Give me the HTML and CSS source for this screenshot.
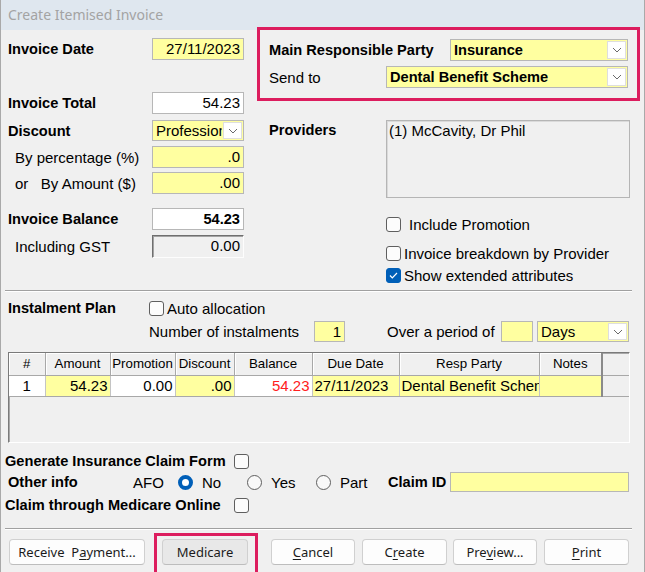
FILE: index.html
```html
<!DOCTYPE html>
<html lang="en">
<head>
    <meta charset="UTF-8">
    <meta name="viewport" content="width=device-width, initial-scale=1.0">
    <title>Create Itemised Invoice</title>
    <link rel="stylesheet" href="styles.css">
</head>
<body>
    <div class="window">
        <div class="titlebar">Create Itemised Invoice</div>

        <div class="top">
            <div class="colLeft">
                <div class="row r1">
                    <span class="lbl b">Invoice Date</span>
                    <span class="field yellow num">27/11/2023</span>
                </div>
                <div class="row r2">
                    <span class="lbl b">Invoice Total</span>
                    <span class="field num">54.23</span>
                </div>
                <div class="row r3">
                    <span class="lbl b">Discount</span>
                    <span class="select w92">
                        <span class="val">Professional</span>
                        <span class="drop"><svg width="10" height="6" viewBox="0 0 10 6"><path d="M1 1l4 4 4-4" fill="none" stroke="#6a6a6a"/></svg></span>
                    </span>
                </div>
                <div class="row r4">
                    <span class="lbl ind">By percentage (%)</span>
                    <span class="field yellow num">.0</span>
                </div>
                <div class="row r5">
                    <span class="lbl ind">or&nbsp;&nbsp;&nbsp;By Amount ($)</span>
                    <span class="field yellow num">.00</span>
                </div>
                <div class="row r6">
                    <span class="lbl b">Invoice Balance</span>
                    <span class="field num b">54.23</span>
                </div>
                <div class="row r7">
                    <span class="lbl ind">Including GST</span>
                    <span class="field sunken num">0.00</span>
                </div>
            </div>

            <div class="colRight">
                <div class="row p1">
                    <span class="lbl b">Main Responsible Party</span>
                    <span class="select w178">
                        <span class="val b">Insurance</span>
                        <span class="drop"><svg width="10" height="6" viewBox="0 0 10 6"><path d="M1 1l4 4 4-4" fill="none" stroke="#6a6a6a"/></svg></span>
                    </span>
                </div>
                <div class="row p2">
                    <span class="lbl">Send to</span>
                    <span class="select w242">
                        <span class="val b">Dental Benefit Scheme</span>
                        <span class="drop"><svg width="10" height="6" viewBox="0 0 10 6"><path d="M1 1l4 4 4-4" fill="none" stroke="#6a6a6a"/></svg></span>
                    </span>
                </div>
                <div class="providers">
                    <span class="lbl b">Providers</span>
                    <div class="list">(1) McCavity, Dr Phil</div>
                </div>
                <div class="chk c1"><span class="box"></span>Include Promotion</div>
                <div class="chk c2"><span class="box"></span>Invoice breakdown by Provider</div>
                <div class="chk c3">
                    <span class="box on"><svg width="9" height="7" viewBox="0 0 9 7"><path d="M1 3.5l2.3 2.3L8 1" fill="none" stroke="#fff" stroke-width="1.2"/></svg></span>Show extended attributes
                </div>
            </div>
        </div>

        <div class="sep"></div>

        <div class="row instA">
            <span class="lblInst b">Instalment Plan</span>
            <span class="box"></span>Auto allocation
        </div>
        <div class="row instB">
            <span class="lblNum">Number of instalments</span>
            <span class="field yellow num w31">1</span>
            <span class="lblPeriod">Over a period of</span>
            <span class="field yellow w32"></span>
            <span class="select w92 days">
                <span class="val">Days</span>
                <span class="drop"><svg width="10" height="6" viewBox="0 0 10 6"><path d="M1 1l4 4 4-4" fill="none" stroke="#6a6a6a"/></svg></span>
            </span>
        </div>

        <div class="grid">
            <table class="tab">
                <tr>
                    <th class="cHash">#</th>
                    <th class="cAmount">Amount</th>
                    <th class="cPromo">Promotion</th>
                    <th class="cDisc">Discount</th>
                    <th class="cBal">Balance</th>
                    <th class="cDue">Due Date</th>
                    <th class="cResp">Resp Party</th>
                    <th class="cNotes">Notes</th>
                    <th class="cFill"></th>
                </tr>
                <tr>
                    <td class="mid">1</td>
                    <td class="yellow num">54.23</td>
                    <td class="num">0.00</td>
                    <td class="yellow num">.00</td>
                    <td class="num red">54.23</td>
                    <td class="yellow">27/11/2023</td>
                    <td class="yellow">Dental Benefit Scheme</td>
                    <td class="yellow last"></td>
                    <td class="fill"></td>
                </tr>
            </table>
        </div>

        <div class="row claim1">
            <span class="lblClaim b">Generate Insurance Claim Form</span>
            <span class="box"></span>
        </div>
        <div class="row claim2">
            <span class="lblOther b">Other info</span>
            <span class="afo">AFO</span>
            <span class="radio on"></span><span class="opt">No</span>
            <span class="radio"></span><span class="opt">Yes</span>
            <span class="radio"></span><span class="opt part">Part</span>
            <span class="lblId b">Claim ID</span>
            <span class="field yellow claimId"></span>
        </div>
        <div class="row claim3">
            <span class="lblClaim b">Claim through Medicare Online</span>
            <span class="box"></span>
        </div>

        <div class="sep sep2"></div>

        <div class="buttons">
            <button class="btn bReceive">Receive&nbsp;&nbsp;P<u>a</u>yment...</button>
            <button class="btn bMedicare">Medicare</button>
            <button class="btn bCancel"><u>C</u>ancel</button>
            <button class="btn bCreate">C<u>r</u>eate</button>
            <button class="btn bPreview">Pre<u>v</u>iew...</button>
            <button class="btn bPrint"><u>P</u>rint</button>
        </div>

        <div class="mark markParty"></div>
        <div class="mark markMedicare"></div>
    </div>
</body>
</html>
```

FILE: styles.css
```css
* {
    margin: 0;
    padding: 0;
    box-sizing: border-box;
}

body {
    background-color: #f0f0f0;
    font-family: "Liberation Sans", Arial, sans-serif;
    font-size: 15px;
    color: #000;
}

.window {
    position: relative;
    width: 645px;
    height: 572px;
    overflow: hidden;
    background-color: #f0f0f0;
    border-left: 1px solid #a9a9a9;
    border-right: 1px solid #a9a9a9;
}

.titlebar {
    height: 30px;
    padding-left: 7px;
    line-height: 30px;
    background-color: #dfe7ef;
    color: #a3a3a3;
    font-family: "Noto Sans", sans-serif;
    font-size: 14px;
}

.b {
    font-weight: bold;
    font-size: 14.6px;
}

/* Parte de cima */

.top {
    display: flex;
}

.colLeft {
    width: 243px;
    padding-left: 7px;
}

.colRight {
    width: 361px;
    margin-left: 25px;
}

.row {
    display: flex;
    align-items: center;
    height: 22px;
    white-space: nowrap;
}

.lbl {
    flex: 1;
}

.ind {
    padding-left: 7px;
}

.r1 { margin-top: 8px; }
.r2 { margin-top: 32px; }
.r3 { margin-top: 6px; height: 21px; }
.r4 { margin-top: 5px; }
.r5 { margin-top: 4px; }
.r6 { margin-top: 14px; }
.r7 { margin-top: 5px; height: 23px; }

.field {
    display: block;
    flex: none;
    width: 92px;
    height: 100%;
    padding: 0 3px;
    line-height: 20px;
    background-color: #fff;
    border: 1px solid #b7b7b7;
    overflow: hidden;
}

.yellow {
    background-color: #ffffa0 !important;
}

.num {
    text-align: right;
}

.sunken {
    background-color: #f0f0f0;
    border-color: #6f6f6f #fdfdfd #fdfdfd #6f6f6f;
    box-shadow: inset 1px 1px 0 #a3a3a3;
}

.select {
    display: flex;
    flex: none;
    height: 100%;
    border: 1px solid #b7b7b7;
    background-color: #ffffa0;
}

.select .val {
    flex: 1;
    padding-left: 3px;
    line-height: 20px;
    overflow: hidden;
}

.drop {
    display: flex;
    align-items: center;
    justify-content: center;
    width: 19px;
    margin: 1px;
    background-color: #fff;
    border: 1px solid #dedede;
}

.w92 { width: 92px; }
.w178 { width: 178px; }
.w242 { width: 242px; }

.p1 { margin-top: 9px; }
.p2 { margin-top: 5px; }

.p1 .select,
.p2 .select {
    margin-right: 2px;
}

.providers {
    display: flex;
    margin-top: 32px;
}

.providers .lbl {
    flex: none;
    width: 117px;
    line-height: 20px;
}

.list {
    width: 244px;
    height: 78px;
    padding: 1px 2px;
    line-height: 18px;
    border: 1px solid #b5b5b5;
    box-shadow: inset 1px 1px 0 #dadada;
}

.chk {
    display: flex;
    align-items: center;
    height: 20px;
    padding-left: 117px;
    white-space: nowrap;
}

.c1 { margin-top: 16px; }
.c2 { margin-top: 9px; }
.c3 { margin-top: 2px; }

.box {
    flex: none;
    width: 15px;
    height: 15px;
    margin-right: 3px;
    border: 1px solid #5f5f5f;
    border-radius: 3px;
    background-color: #fcfcfc;
}

.c1 .box {
    margin-right: 8px;
}

.box.on {
    display: flex;
    align-items: center;
    justify-content: center;
    background-color: #005fb8;
    border-color: #005fb8;
}

.sep {
    width: 627px;
    height: 2px;
    margin: 5px 0 0 4px;
    border-top: 1px solid #a0a0a0;
    border-bottom: 1px solid #fff;
}

/* Parcelamento */

.instA {
    height: 20px;
    margin-top: 6px;
    padding-left: 7px;
}

.lblInst {
    width: 141px;
}

.instB {
    height: 21px;
    margin-top: 3px;
    padding-left: 148px;
}

.lblNum {
    width: 165px;
}

.w31 { width: 31px; }
.w32 { width: 32px; }

.lblPeriod {
    width: 114px;
    margin-left: 42px;
}

.days {
    margin-left: 4px;
}

/* Grade */

.grid {
    width: 622px;
    height: 91px;
    margin: 10px 0 0 7px;
    overflow: hidden;
    border-top: 1px solid #7a7a7a;
    border-left: 1px solid #7a7a7a;
    border-right: 1px solid #fff;
    border-bottom: 1px solid #fff;
    box-shadow: inset 1px 1px 0 #a8a8a8;
}

.tab {
    width: 620px;
    table-layout: fixed;
    border-collapse: collapse;
}

.tab th {
    height: 22px;
    font-weight: normal;
    font-size: 13.3px;
    border-right: 1px solid #a8a8a8;
    border-bottom: 1px solid #a8a8a8;
    box-shadow: inset 1px 1px 0 #fff;
    white-space: nowrap;
    overflow: hidden;
}

.tab td {
    height: 21px;
    padding: 0 2px;
    background-color: #fff;
    border-right: 1px solid #c4c4c4;
    border-bottom: 1px solid #a8a8a8;
    white-space: nowrap;
    overflow: hidden;
}

.tab th.cFill {
    border-right: none;
    box-shadow: none;
}

.tab td.fill {
    background-color: #f0f0f0;
    border-right: none;
}

.tab .cNotes,
.tab td.last {
    border-right: 2px solid #8a8a8a;
}

.cHash { width: 36px; }
.cAmount { width: 65px; }
.cPromo { width: 65px; }
.cDisc { width: 59px; }
.cBal { width: 78px; }
.cDue { width: 87px; }
.cResp { width: 140px; }
.cNotes { width: 63px; }

.mid {
    text-align: center;
}

.red {
    color: #ff2020;
}

/* Sinistro */

.claim1 {
    height: 20px;
    margin-top: 8px;
    padding-left: 4px;
}

.claim2 {
    height: 20px;
    margin-top: 1px;
    padding-left: 7px;
}

.claim3 {
    height: 20px;
    margin-top: 3px;
    padding-left: 4px;
}

.lblClaim {
    width: 229px;
}

.lblOther {
    width: 125px;
}

.afo {
    width: 45px;
}

.radio {
    flex: none;
    width: 15px;
    height: 15px;
    margin-right: 9px;
    border: 1px solid #5f5f5f;
    border-radius: 50%;
    background-color: #f9f9f9;
}

.radio.on {
    border: 4.5px solid #005fb8;
    background-color: #fff;
}

.opt {
    width: 45px;
}

.opt.part {
    width: 48px;
}

.lblId {
    width: 62px;
}

.claimId {
    width: 179px;
}

.sep2 {
    margin-top: 13px;
}

/* Botoes */

.buttons {
    display: flex;
    margin-top: 9px;
    padding-left: 8px;
}

.btn {
    height: 26px;
    font-family: "Noto Sans", sans-serif;
    font-size: 13px;
    color: #1b1b1b;
    background-color: #fdfdfd;
    border: 1px solid #d0d0d0;
    border-bottom-color: #bdbdbd;
    border-radius: 4px;
    white-space: nowrap;
}

.btn u {
    text-underline-offset: 2px;
}

.bReceive { width: 136px; }
.bMedicare { width: 86px; margin-left: 17px; background-color: #e8e8e8; }
.bCancel { width: 84px; margin-left: 23px; }
.bCreate { width: 85px; margin-left: 7px; }
.bPreview { width: 84px; margin-left: 6px; }
.bPrint { width: 85px; margin-left: 7px; }

/* Marcacoes */

.mark {
    position: absolute;
    border: 3px solid #dc1d5e;
}

.markParty {
    left: 256px;
    top: 27px;
    width: 383px;
    height: 74px;
}

.markMedicare {
    left: 153px;
    top: 533px;
    width: 104px;
    height: 45px;
}
```
